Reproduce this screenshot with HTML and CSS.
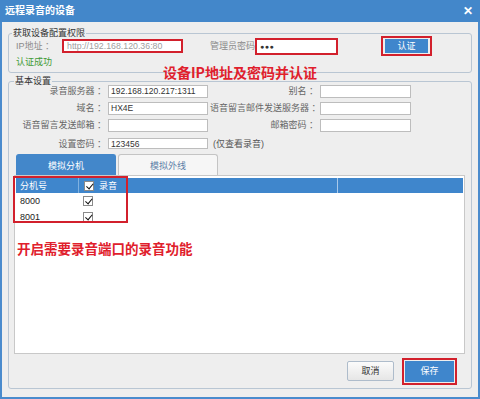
FILE: index.html
```html
<!DOCTYPE html>
<html lang="zh">
<head>
<meta charset="utf-8">
<title>远程录音的设备</title>
<link rel="stylesheet" href="styles.css">
</head>
<body>
<div class="window">
  <div class="titlebar">
    <span class="title">远程录音的设备</span>
    <span class="close">✕</span>
  </div>
  <div class="content">
    <div class="group auth">
      <span class="legend">获取设备配置权限</span>
      <div class="auth-row">
        <span class="lbl ip-lbl">IP地址 ：</span>
        <div class="field ip-field mark">http://192.168.120.36:80</div>
        <span class="lbl pw-lbl">管理员密码</span>
        <div class="field pw-field mark">●●●</div>
        <div class="btn-mark mark"><span class="btn blue auth-btn">认证</span></div>
      </div>
      <div class="ok">认证成功</div>
    </div>
    <div class="note note-top">设备IP地址及密码并认证</div>

    <div class="group basic">
      <span class="legend">基本设置</span>
      <div class="form">
        <span class="flbl">录音服务器 ：</span>
        <div class="input">192.168.120.217:1311</div>
        <span class="flbl">别名 ：</span>
        <div class="input"></div>

        <span class="flbl">域名 ：</span>
        <div class="input">HX4E</div>
        <span class="flbl">语音留言邮件发送服务器 ：</span>
        <div class="input"></div>

        <span class="flbl">语音留言发送邮箱 ：</span>
        <div class="input"></div>
        <span class="flbl">邮箱密码 ：</span>
        <div class="input"></div>

        <span class="flbl last">设置密码 ：</span>
        <div class="input last">123456</div>
        <span class="hint last">(仅查看录音)</span>
      </div>

      <div class="tabs">
        <span class="tab active">模拟分机</span>
        <span class="tab">模拟外线</span>
      </div>
      <div class="panel">
        <div class="grid-head">
          <span class="c1">分机号</span>
          <span class="c2"><i class="cb"></i>录音</span>
          <span class="c3"></span>
          <span class="c4"></span>
        </div>
        <div class="grid-row">
          <span class="c1">8000</span>
          <span class="c2"><i class="cb"></i></span>
        </div>
        <div class="grid-row">
          <span class="c1">8001</span>
          <span class="c2"><i class="cb"></i></span>
        </div>
        <div class="table-mark"></div>
        <div class="note note-grid">开启需要录音端口的录音功能</div>
      </div>
      <div class="footer">
        <span class="btn cancel">取消</span>
        <div class="save-mark mark"><span class="btn blue save">保存</span></div>
      </div>
    </div>
  </div>
</div>
</body>
</html>
```

FILE: styles.css
```css
* { box-sizing: border-box; }
html, body { margin: 0; padding: 0; }
body {
  font-family: "Liberation Sans", "Noto Sans CJK SC", sans-serif;
  font-size: 9px;
  color: #555;
  background: #eeeeee;
}
.window {
  width: 480px;
  height: 399px;
  background: #eeeeee;
  border: 2px solid #4a8bcd;
  border-top: none;
  position: relative;
}
.titlebar {
  height: 22px;
  margin: 0 -2px;
  background: #4387ca;
  color: #fff;
  display: flex;
  align-items: center;
  justify-content: space-between;
  padding: 0 7px 0 5px;
}
.title { font-size: 10px; line-height: 12px; font-weight: bold; }
.close { font-size: 12px; line-height: 14px; font-weight: bold; }
.content { padding: 11px 6px 0; position: relative; }

.group {
  position: relative;
  border: 1px solid #b9c6d3;
  border-radius: 3px;
}
.legend {
  position: absolute;
  top: -7px;
  background: #eeeeee;
  color: #333;
  line-height: 12px;
  padding: 0 1px;
  white-space: nowrap;
}
.auth { padding: 2px 0 4px 7px; }
.auth .legend { left: 3px; }
.auth-row { display: flex; align-items: center; height: 20px; }
.lbl { color: #8a8a8a; line-height: 12px; white-space: nowrap; }
.ip-lbl { width: 46px; }
.pw-lbl { width: 45px; margin-left: 27px; }
.mark { border: 2px solid #d2202c; }
.field {
  background: #fff;
  line-height: 10px;
  padding: 0 3px;
  font-size: 8.8px;
  white-space: nowrap;
  overflow: hidden;
}
.ip-field { width: 121px; height: 14px; color: #a0a0a0; }
.pw-field { width: 83px; height: 17px; line-height: 13px; color: #333; font-size: 7px; letter-spacing: 0.5px; }
.btn-mark { margin-left: 43px; width: 51px; height: 20px; padding: 1px 2px; }
.btn {
  display: flex;
  align-items: center;
  justify-content: center;
  line-height: 12px;
}
.blue { background: #3f86cc; color: #fff; }
.auth-btn { width: 43px; height: 14px; }
.ok { color: #3f9a35; line-height: 12px; }

.note {
  color: #e0202c;
  font-weight: bold;
  white-space: nowrap;
  font-family: "Noto Sans CJK SC", sans-serif;
}
.note-top {
  position: absolute;
  left: 161px;
  top: 42px;
  font-size: 14px;
  line-height: 16px;
}

.basic { margin-top: 8px; padding: 3px 6px 0 5px; height: 308px; display: flex; flex-direction: column; }
.basic .legend { left: 5px; }
.form {
  display: grid;
  grid-template-columns: 92px 100px 108px 91px;
  grid-auto-rows: 13px;
  column-gap: 2px;
  row-gap: 4px;
}
.flbl { text-align: right; color: #666; line-height: 13px; white-space: nowrap; }
.input {
  background: #fff;
  border: 1px solid #bdbdbd;
  color: #333;
  line-height: 11px;
  padding: 0 2px;
  font-size: 8.5px;
  white-space: nowrap;
}
.last { margin-top: 2px; }
.hint { color: #555; line-height: 13px; padding-left: 3px; white-space: nowrap; }

.tabs { display: flex; gap: 2px; margin: 5px 0 0 2px; height: 21px; }
.tab {
  width: 100px;
  display: flex;
  align-items: center;
  justify-content: center;
  border: 1px solid #c4c4c4;
  border-bottom: none;
  border-radius: 3px 3px 0 0;
  background: #f6f6f6;
  color: #5d7fa8;
}
.tab.active { background: #4387ca; border-color: #4387ca; color: #fff; }

.panel {
  position: relative;
  height: 179px;
  background: #fff;
  border: 1px solid #c8c8c8;
  padding: 2px 1px;
}
.grid-head, .grid-row { display: flex; align-items: center; }
.grid-head { height: 15px; background: #3f86cc; color: #fff; }
.grid-row { height: 16px; color: #222; }
.c1 { width: 62px; padding-left: 4px; line-height: 12px; }
.c2 { width: 49px; display: flex; align-items: center; padding-left: 5px; gap: 5px; line-height: 12px; }
.c3 { width: 210px; }
.c4 { flex: 1; }
.grid-head .c2, .grid-head .c3 { border-left: 1px solid #7fb1e0; height: 15px; }
.grid-head .c4 { border-left: 1px solid #a9c9ea; height: 15px; }
.cb {
  display: inline-block;
  width: 10px;
  height: 10px;
  background: #fff;
  border: 1px solid #8a8a8a;
  position: relative;
}
.cb::after {
  content: "";
  position: absolute;
  left: 2.5px;
  top: 0px;
  width: 3px;
  height: 5.5px;
  border: solid #111;
  border-width: 0 1.6px 1.6px 0;
  transform: rotate(40deg);
}
.table-mark {
  position: absolute;
  left: -2px;
  top: 0;
  width: 115px;
  height: 47px;
  border: 2px solid #d2202c;
}
.note-grid { font-size: 13.5px; line-height: 16px; margin: 15px 0 0 1px; }

.footer {
  flex: 1;
  display: flex;
  align-items: center;
  justify-content: flex-end;
  padding-right: 8px;
  gap: 8px;
}
.cancel {
  width: 47px;
  height: 20px;
  border: 1px solid #aebccb;
  border-radius: 2px;
  background: linear-gradient(#fbfbfb, #e6e6e6);
  color: #333;
}
.save-mark { width: 55px; height: 27px; padding: 1px; }
.save { width: 49px; height: 21px; }
```
